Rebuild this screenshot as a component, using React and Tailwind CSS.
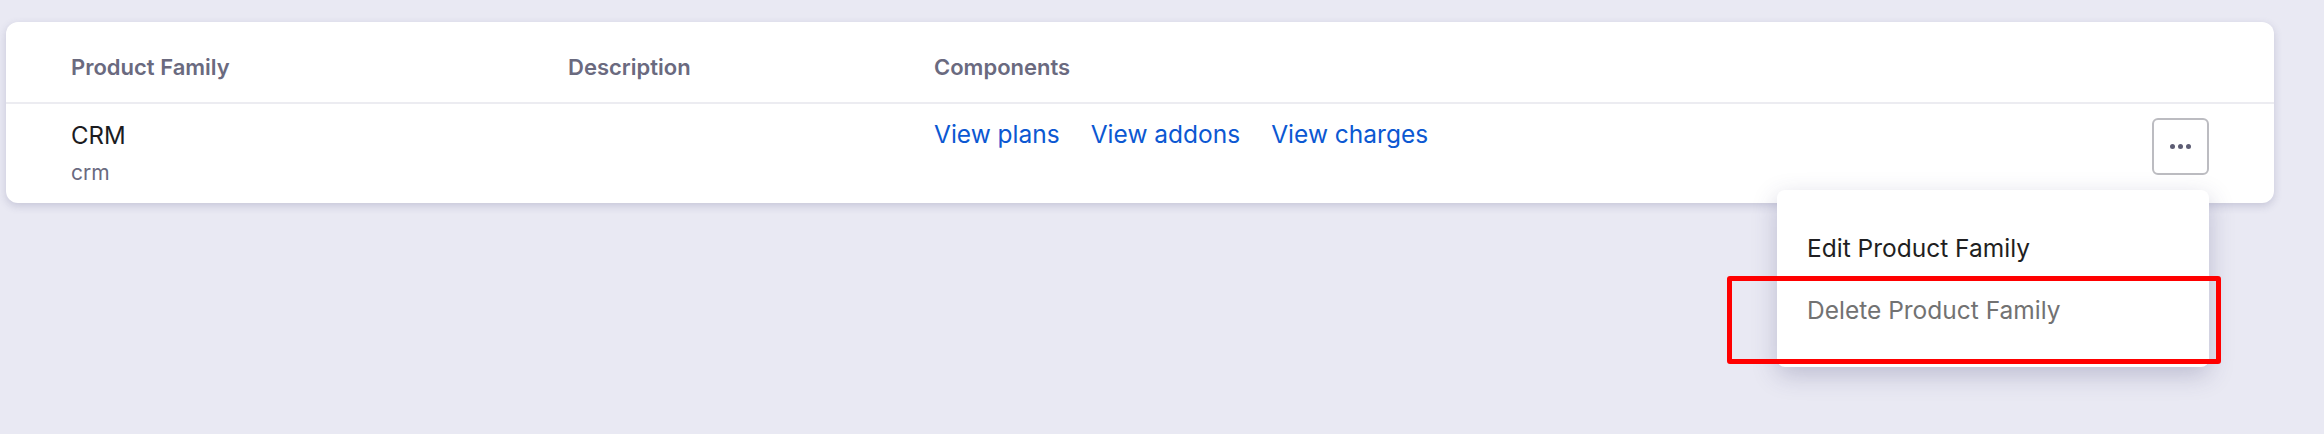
import React from "react";

export default function App() {
  return (
    <div
      className="w-[2324px] h-[434px] bg-[#e9e9f3] pt-[22px] pl-[6px] overflow-hidden"
      style={{ fontFamily: "Inter, 'Noto Sans', sans-serif" }}
    >
      <div className="w-[2268px] bg-white rounded-[12px] shadow-[0_3px_9px_rgba(60,60,110,0.2)]">
        {/* header */}
        <div className="flex h-[80px] pl-[65px] pr-[65px] pt-[33px] text-[22px] leading-[24px] font-semibold text-[#6a6a7f]">
          <div className="w-[497px]">Product Family</div>
          <div className="w-[366px]">Description</div>
          <div className="flex-1">Components</div>
        </div>
        <div className="h-[2px] bg-[#ececf1]" />
        {/* row */}
        <div className="flex items-start pl-[65px] pr-[65px] pt-[14px] pb-[18px]">
          <div className="w-[497px] pt-[3px]">
            <div className="text-[24px] leading-[30px] text-[#1c1c1f]">CRM</div>
            <div className="mt-[10px] text-[21px] leading-[24px] text-[#6a6a7f]">crm</div>
          </div>
          <div className="w-[366px]" />
          <div className="flex-1 flex gap-[31px] pt-[1px] text-[24.5px] leading-[30px] text-[#0c58d2]">
            <span>View plans</span>
            <span>View addons</span>
            <span>View charges</span>
          </div>
          <div className="relative">
            <button className="w-[57px] h-[57px] rounded-[6px] border-2 border-[#bcbcc1] bg-white flex items-center justify-center gap-[3px]">
              <span className="w-[5px] h-[5px] rounded-full bg-[#5d5d74]" />
              <span className="w-[5px] h-[5px] rounded-full bg-[#5d5d74]" />
              <span className="w-[5px] h-[5px] rounded-full bg-[#5d5d74]" />
            </button>
            <div className="absolute right-0 top-[72px] w-[432px] bg-white rounded-[8px] shadow-[0_8px_24px_rgba(60,60,110,0.25)] pt-[27px] pb-[26px] z-10">
              <div className="h-[62px] flex items-center px-[30px] text-[24.5px] text-[#1f1f22]">
                Edit Product Family
              </div>
              <div className="h-[62px] flex items-center px-[30px] text-[24.5px] text-[#727272]">
                Delete Product Family
              </div>
              <div className="absolute left-[-50px] top-[86px] w-[494px] h-[88px] border-[5px] border-[#ff0000] rounded-[3px] pointer-events-none" />
            </div>
          </div>
        </div>
      </div>
    </div>
  );
}
